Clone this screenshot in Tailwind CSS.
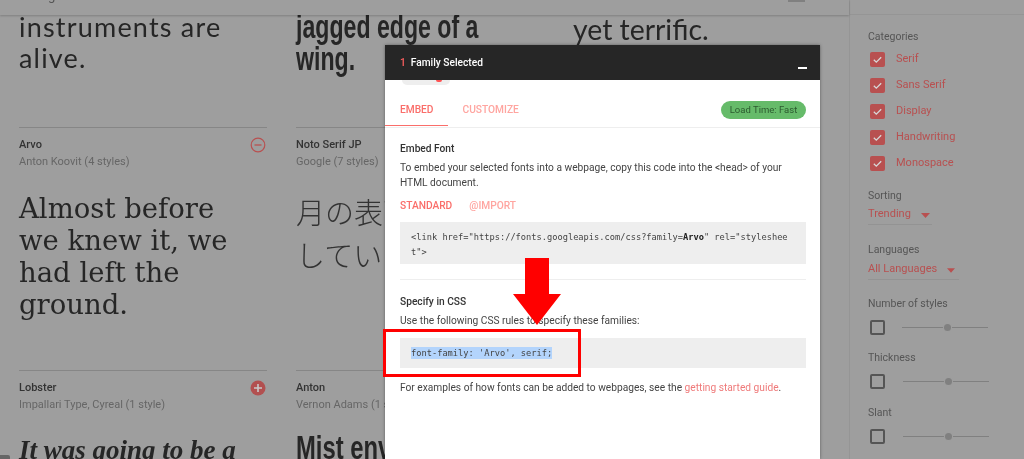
<!doctype html>
<html lang="en">
<head>
<meta charset="utf-8">
<script src="https://cdn.jsdelivr.net/npm/@tailwindcss/browser@4"></script>
<title>Google Fonts</title>
</head>
<body class="m-0">
<div class="relative w-[1024px] h-[459px] overflow-hidden bg-[#9e9e9e] flex font-['Roboto',sans-serif] text-[#262626] blur-[0.35px]">
  <main class="w-[849px] shrink-0 flex flex-col">
    <header class="relative z-10 h-[15px] shrink-0 bg-[#9e9e9e] shadow-[0_1px_2px_rgba(0,0,0,0.2)] flex justify-between overflow-hidden pl-[48px] pr-[44px]">
      <span class="text-[13px] leading-[13px] -mt-[11px] text-[#555]">g</span>
      <span class="w-[17px] h-[2px] bg-[#808080]"></span>
    </header>
    <div class="grid grid-cols-[248px_248px_248px] gap-x-[29px] pl-[19px] grid-rows-[113px_243px_74px]">
      <!-- row 1 -->
      <div class="border-b border-[#868686]">
        <p class="-mt-[4px] text-[27px] leading-[31px] tracking-[1.2px] font-['Lato',sans-serif]">instruments are<br>alive.</p>
      </div>
      <div class="border-b border-[#868686]">
        <p class="-mt-[5px] text-[34px] leading-[32px] font-bold font-['Liberation_Sans',sans-serif] whitespace-nowrap origin-left scale-x-[0.68]">jagged edge of a<br>wing.</p>
      </div>
      <div>
        <p class="-mt-[2px] text-[28.400px] leading-[32px] font-['Lato',sans-serif]">yet terrific.</p>
      </div>
      <!-- row 2 -->
      <div class="border-b border-[#868686]">
        <div class="flex justify-between items-start pt-[10px]">
          <div>
            <h3 class="text-[11px] leading-[14px] font-medium text-[#333]">Arvo</h3>
            <p class="text-[11px] leading-[14px] mt-[3px] text-[#666]">Anton Koovit (4 styles)</p>
          </div>
          <svg class="-mt-[1px] mr-[1px]" width="16" height="16" viewBox="0 0 16 16" fill="none"><circle cx="8" cy="8" r="6.800" stroke="#b85050" stroke-width="1.200"/><path d="M4.500 8h7" stroke="#b85050" stroke-width="1.300"/></svg>
        </div>
        <p class="mt-[23px] text-[27.500px] leading-[32px] font-['DejaVu_Serif',serif] whitespace-nowrap">Almost before<br>we knew it, we<br>had left the<br>ground.</p>
      </div>
      <div class="border-b border-[#868686]">
        <div class="pt-[10px]">
          <h3 class="text-[11px] leading-[14px] font-medium text-[#333]">Noto Serif JP</h3>
          <p class="text-[11px] leading-[14px] mt-[3px] text-[#666]">Google (7 styles)</p>
        </div>
        <p class="mt-[21px] text-[29px] leading-[43px] font-['Noto_Sans_CJK_JP',sans-serif] font-light whitespace-nowrap text-[#333]">月の表面に着陸<br>していました</p>
      </div>
      <div></div>
      <!-- row 3 -->
      <div>
        <div class="flex justify-between items-start pt-[10px]">
          <div>
            <h3 class="text-[11px] leading-[14px] font-medium text-[#333]">Lobster</h3>
            <p class="text-[11px] leading-[14px] mt-[3px] text-[#666]">Impallari Type, Cyreal (1 style)</p>
          </div>
          <svg class="-mt-[1px] mr-[1px]" width="16" height="16" viewBox="0 0 16 16"><circle cx="8" cy="8" r="7.500" fill="#b25050"/><path d="M8 4v8M4 8h8" stroke="#c9c9c9" stroke-width="1.600"/></svg>
        </div>
        <p class="mt-[22px] text-[27px] leading-[32px] font-bold italic font-['Liberation_Serif',serif] whitespace-nowrap">It was going to be a</p>
      </div>
      <div>
        <div class="pt-[10px]">
          <h3 class="text-[11px] leading-[14px] font-medium text-[#333]">Anton</h3>
          <p class="text-[11px] leading-[14px] mt-[3px] text-[#666] whitespace-nowrap">Vernon Adams (1 style)</p>
        </div>
        <p class="mt-[19px] text-[34px] leading-[32px] font-bold font-['Liberation_Sans',sans-serif] whitespace-nowrap origin-left scale-x-[0.7]">Mist enveloped</p>
      </div>
      <div></div>
    </div>
  </main>

  <aside class="flex-1 border-l border-[#959595] pl-[18px] text-[10.500px] text-[#555]">
    <div class="-mx-[18px] h-[15px] border-b border-[#959595]"></div>
    <h4 class="mt-[15px] leading-[14px]">Categories</h4>
    <ul class="mt-[8px] pl-[2px] flex flex-col gap-[11px] text-[#b85050] text-[11px]">
      <li class="flex items-center gap-[11px] h-[15px]"><svg width="15" height="15" viewBox="0 0 15 15"><rect width="15" height="15" rx="2" fill="#b85050"/><path d="M3.800 7.800l2.500 2.400 4.900-5" stroke="#d8d8d8" stroke-width="1.300" fill="none"/></svg>Serif</li>
      <li class="flex items-center gap-[11px] h-[15px]"><svg width="15" height="15" viewBox="0 0 15 15"><rect width="15" height="15" rx="2" fill="#b85050"/><path d="M3.800 7.800l2.500 2.400 4.900-5" stroke="#d8d8d8" stroke-width="1.300" fill="none"/></svg>Sans Serif</li>
      <li class="flex items-center gap-[11px] h-[15px]"><svg width="15" height="15" viewBox="0 0 15 15"><rect width="15" height="15" rx="2" fill="#b85050"/><path d="M3.800 7.800l2.500 2.400 4.900-5" stroke="#d8d8d8" stroke-width="1.300" fill="none"/></svg>Display</li>
      <li class="flex items-center gap-[11px] h-[15px]"><svg width="15" height="15" viewBox="0 0 15 15"><rect width="15" height="15" rx="2" fill="#b85050"/><path d="M3.800 7.800l2.500 2.400 4.900-5" stroke="#d8d8d8" stroke-width="1.300" fill="none"/></svg>Handwriting</li>
      <li class="flex items-center gap-[11px] h-[15px]"><svg width="15" height="15" viewBox="0 0 15 15"><rect width="15" height="15" rx="2" fill="#b85050"/><path d="M3.800 7.800l2.500 2.400 4.900-5" stroke="#d8d8d8" stroke-width="1.300" fill="none"/></svg>Monospace</li>
    </ul>
    <h4 class="mt-[18px] leading-[14px]">Sorting</h4>
    <div class="mt-[1px] w-[64px] h-[21px] border-b border-[#939393] flex items-center justify-between pr-[2px] text-[#b85050] text-[11px] leading-[14px]"><span>Trending</span><svg class="mt-[2px]" width="9" height="5" viewBox="0 0 9 5"><path d="M0 0h9L4.500 5z" fill="#b85050"/></svg></div>
    <h4 class="mt-[18px] leading-[14px]">Languages</h4>
    <div class="mt-[2px] w-[91px] h-[21px] border-b border-[#939393] flex items-center justify-between pr-[4px] text-[#b85050] text-[11px] leading-[14px]"><span>All Languages</span><svg class="mt-[2px]" width="8" height="5" viewBox="0 0 9 5"><path d="M0 0h9L4.500 5z" fill="#b85050"/></svg></div>
    <h4 class="mt-[17px] leading-[14px]">Number of styles</h4>
    <div class="mt-[9px] pl-[2px] flex items-center gap-[17px]">
      <span class="w-[15px] h-[15px] rounded-[2px] border-2 border-[#555]"></span>
      <span class="relative w-[86px] h-px bg-[#808080]"><span class="absolute left-[42px] -top-[3px] w-[7px] h-[7px] rounded-full bg-[#808080] ring-1 ring-[#9e9e9e]"></span></span>
    </div>
    <h4 class="mt-[16px] leading-[14px]">Thickness</h4>
    <div class="mt-[9px] pl-[2px] flex items-center gap-[18px]">
      <span class="w-[15px] h-[15px] rounded-[2px] border-2 border-[#555]"></span>
      <span class="relative w-[86px] h-px bg-[#808080]"><span class="absolute left-[42px] -top-[3px] w-[7px] h-[7px] rounded-full bg-[#808080] ring-1 ring-[#9e9e9e]"></span></span>
    </div>
    <h4 class="mt-[17px] leading-[14px]">Slant</h4>
    <div class="mt-[9px] pl-[2px] flex items-center gap-[18px]">
      <span class="w-[15px] h-[15px] rounded-[2px] border-2 border-[#555]"></span>
      <span class="relative w-[86px] h-px bg-[#808080]"><span class="absolute left-[42px] -top-[3px] w-[7px] h-[7px] rounded-full bg-[#808080] ring-1 ring-[#9e9e9e]"></span></span>
    </div>
  </aside>

  <span class="absolute left-0 bottom-0 w-[10px] h-[4px] bg-[#666] rounded-tr-[2px]"></span>

  <section class="absolute z-20 left-[385px] top-[45px] w-[435px] h-[414px] bg-white shadow-[0_0_3px_rgba(0,0,0,0.4)] flex flex-col text-[10.200px]">
    <div class="h-[35px] shrink-0 bg-[#262626] text-white flex justify-between pl-[15px] pr-[13px] pt-[11px] font-medium text-[10.200px] leading-[14px]">
      <div><span class="text-[#ff5f5f] mr-[5px]">1</span>Family Selected</div>
      <span class="w-[9px] h-[2px] bg-white mt-[11px]"></span>
    </div>
    <div class="ml-[17px] w-[48px] h-[5px] shrink-0 bg-[#eee] rounded-b-[5px] flex justify-end pr-[8px]"><span class="w-[6px] h-[2px] bg-[#ff5252] rounded-b-[3px]"></span></div>
    <div class="h-[43px] shrink-0 border-b border-[#eee] flex items-center justify-between pl-[15px] pr-[14px] pt-[7px] font-medium text-[10.200px]">
      <div class="flex gap-[29px]"><span class="text-[#fa6e6a] relative">EMBED<span class="absolute -left-[15px] -right-[14px] top-[23px] h-[1.500px] bg-[#fa6e6a]"></span></span><span class="text-[#ffa5a0]">CUSTOMIZE</span></div>
      <span class="w-[85px] h-[18px] rounded-full bg-[#66bb6a] flex items-center justify-center text-[#2c5a2f] text-[9.500px] font-normal pt-[1px]">Load Time: Fast</span>
    </div>
    <div class="pl-[15px] pr-[14px]">
      <h3 class="mt-[14px] font-medium text-[#333] text-[10.200px] leading-[14px]">Embed Font</h3>
      <p class="mt-[4px] leading-[15px] text-[#444] text-[10.200px]">To embed your selected fonts into a webpage, copy this code into the &lt;head&gt; of your HTML document.</p>
      <div class="mt-[9px] flex gap-[17px] leading-[14px] text-[10.200px] font-medium"><span class="text-[#fa6e6a]">STANDARD</span><span class="text-[#ffa5a0]">@IMPORT</span></div>
      <pre class="mt-[9px] h-[42px] bg-[#eee] pl-[11px] pt-[8px] font-['DejaVu_Sans_Mono',monospace] text-[8.700px] leading-[15px] text-[#444]">&lt;link href="https://fonts.googleapis.com/css?family=<b class="text-[#222]">Arvo</b>" rel="styleshee
t"&gt;</pre>
      <div class="mt-[15px] border-t border-[#eee]"></div>
      <h3 class="mt-[15px] font-medium text-[#333] text-[10.200px] leading-[14px]">Specify in CSS</h3>
      <p class="mt-[4px] leading-[15px] text-[#444] text-[10.200px]">Use the following CSS rules to specify these families:</p>
      <div class="mt-[10px] h-[30px] bg-[#eee] pl-[11px] flex items-center font-['DejaVu_Sans_Mono',monospace] text-[8.700px] text-[#444]"><span class="bg-[#b3d4fc] leading-[12px]">font-family: 'Arvo', serif;</span></div>
      <p class="mt-[12px] leading-[15px] text-[#444] text-[10.200px]">For examples of how fonts can be added to webpages, see the <span class="text-[#ef7a7a]">getting started guide</span>.</p>
    </div>
  </section>

  <div class="absolute z-30 left-[383px] top-[329px] w-[198px] h-[48px] border-[3px] border-[#ff0000]"></div>
  <svg class="absolute z-30 left-[513px] top-[258px]" width="48" height="68" viewBox="0 0 48 68"><path d="M12 0h24v36h12L24 67 0 36h12z" fill="#ff0000"/></svg>
</div>
</body>
</html>
